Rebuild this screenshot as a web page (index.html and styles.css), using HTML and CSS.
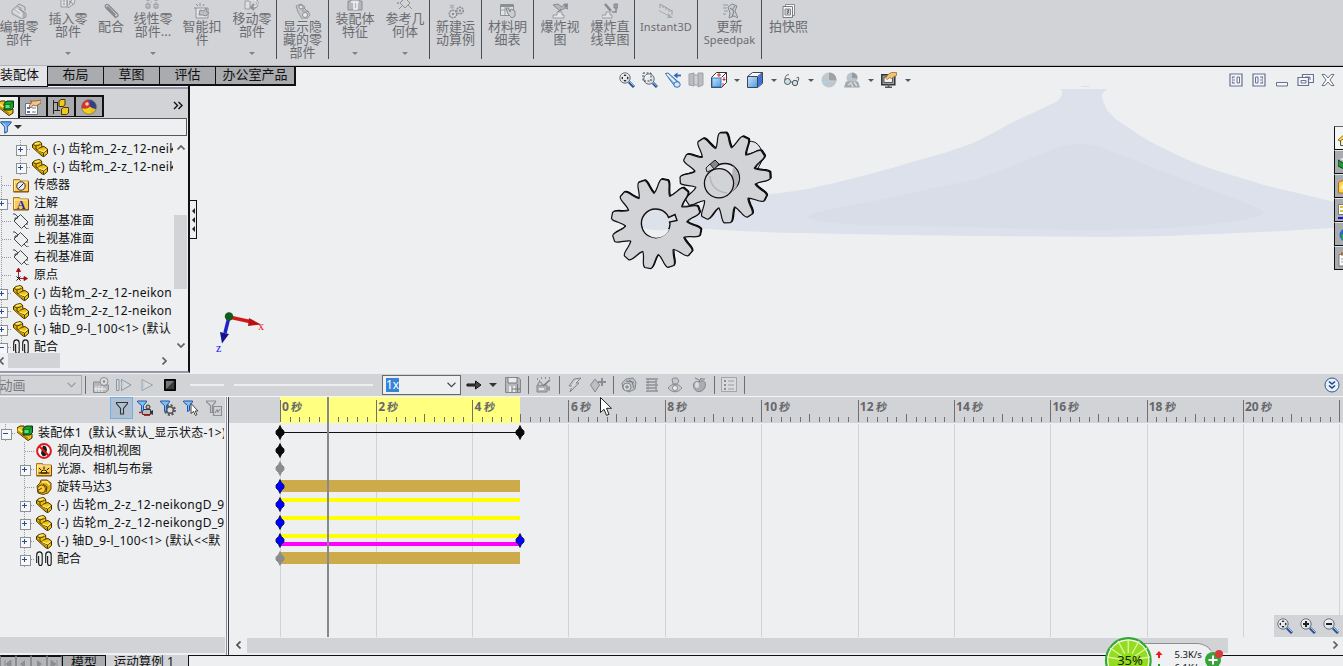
FILE: index.html
```html
<!DOCTYPE html>
<html lang="zh-CN">
<head>
<meta charset="utf-8">
<title>装配体1</title>
<link rel="stylesheet" href="styles.css">
</head>
<body>
<svg class="defs" width="0" height="0">
  <defs>
    <linearGradient id="lens" x1="0" y1="0" x2="1" y2="1"><stop offset="0" stop-color="#fff"/><stop offset="1" stop-color="#c9d3dc"/></linearGradient>
    <linearGradient id="blueface" x1="0" y1="0" x2="1" y2="1"><stop offset="0" stop-color="#c4e3fa"/><stop offset="1" stop-color="#4d9be6"/></linearGradient>
  </defs>
  <symbol id="part" viewBox="0 0 16 16">
    <path d="M.5 3.500L3 1.500 7.500.500 9.500 2 10 6 12 5.500 15.500 8V12.500L12 15.500 10 15 .5 6.500z" fill="#f0c313" stroke="#3d2b00"/>
    <path d="M1 5l10 8.500V15L1 7z" fill="#b98a05"/>
    <path d="M1 3.500l3 1.500v3l7.500 4v3M4 5l4.500-1.500M11.500 12l4-3M6.500 7.500L10 6" fill="none" stroke="#3d2b00" stroke-width=".9"/>
    <path d="M3 2.700l4-.9M6.500 9l5 1.800 2.500-2" stroke="#fff27a" stroke-width="1.300" fill="none"/>
  </symbol>
  <symbol id="assembly" viewBox="0 0 16 16">
    <path d="M0 3l3-2h4l1 4 7 4v4l-4 2.500L0 7z" fill="#f0c31a" stroke="#3d2b00"/>
    <path d="M0 5l11 7.500v2.500L0 7z" fill="#b98a05"/>
    <path d="M6 3.500L9 1h6.500v6.500L13 10H6z" fill="#16a32c" stroke="#07380f"/>
    <path d="M7 4.500h5v4H7zM12.500 4l2.500-2" fill="#5fe07a" stroke="#0d5a1b" stroke-width=".7"/>
    <path d="M1.500 4l4 3" stroke="#fff38a" stroke-width="1.200"/>
  </symbol>
  <symbol id="folder-base" viewBox="0 0 16 16">
    <path d="M.5 2.500h6l1 1.500h8v10.500h-15z" fill="#fbc956" stroke="#b3761a"/>
    <path d="M1.500 5h13M1.500 4v9.500" stroke="#fff1a8" fill="none"/>
    <path d="M15.500 5v10h-15" stroke="#7b4a07" fill="none"/>
  </symbol>
  <symbol id="sensor" viewBox="0 0 16 16"><use href="#folder-base"/><circle cx="8" cy="9" r="4.200" fill="#e8edf4" stroke="#333"/><path d="M5.500 11.500l5-5" stroke="#222"/></symbol>
  <symbol id="note" viewBox="0 0 16 16"><use href="#folder-base"/><text x="8" y="13.500" text-anchor="middle" class="note-letter">A</text></symbol>
  <symbol id="light" viewBox="0 0 16 16"><use href="#folder-base"/><path d="M5 12a3 3 0 0 1 6 0z" fill="#fff04b" stroke="#1e1200"/><path d="M2.500 12h11M8 8V5.500M5 9L3 7M11 9l2-2" stroke="#1e1200" fill="none"/></symbol>
  <symbol id="plane" viewBox="0 0 16 16"><path d="M1 8l6.500-6.500L15 9l-6.500 6.500zM0 1h2l3 3M16 16h-2l-3-3M2 7v-2h3M14 10v2" fill="none" stroke="#333" stroke-width=".9"/></symbol>
  <symbol id="origin" viewBox="0 0 16 16"><path d="M5.500 12V2M3.500 4.500L5.500 1l2 3.500zM6 11.500h7M11 9.500l3.500 2-3.500 2z" stroke="#9c0d16" fill="#9c0d16" stroke-width=".9"/><path d="M3.500 9.500l4 4M7.500 9.500l-4 4" stroke="#111"/></symbol>
  <symbol id="mates" viewBox="0 0 16 16"><path d="M.7 12V4a2.500 2.800 0 0 1 5.500 0v8a1.800 2.500 0 0 1-3.600 0V5M9.700 12V4a2.500 2.800 0 0 1 5.500 0v8a1.800 2.500 0 0 1-3.600 0V5" fill="none" stroke="#1c1c1c" stroke-width="1.150"/></symbol>
  <symbol id="nocam" viewBox="0 0 16 16"><circle cx="8" cy="8" r="6.900" fill="#fff" stroke="#dc1a1a" stroke-width="2"/><path d="M7 2.500l3 1 1 3-1 6-3 1-2-3 1-5z" fill="#1a1a1a"/><path d="M3.300 3.300l9.400 9.400" stroke="#dc1a1a" stroke-width="2"/></symbol>
  <symbol id="motor" viewBox="0 0 16 16"><path d="M1 7l3-3 1-3h6l4 3v6l-3 4-5 1.500L2 14z" fill="#e2ab14" stroke="#6a4600"/><circle cx="5.500" cy="10" r="4" fill="#f5cf3c" stroke="#6a4600"/><path d="M6 3l5 0 2.500 3" stroke="#fff07d" fill="none" stroke-width="1.500"/><path d="M1 12l5-3M7 5l4 3-1 5" stroke="#503500" fill="none"/></symbol>
  <symbol id="sheet" viewBox="0 0 16 16"><path d="M.5 4.500h12v11H.5z" fill="#fff" stroke="#69717e"/><path d="M2 8h3v2H2zM2 12h3v2H2z" fill="#5573b8"/><path d="M7 9h4M7 13h4" stroke="#777"/><path d="M5 2l5 0 6-1v3l-5 3-3-1-2 3-2-2 3-4z" fill="#f2c28e" stroke="#8b5527" stroke-width=".8"/></symbol>
  <symbol id="config" viewBox="0 0 16 16"><path d="M.5 1v14M1 3.500h4M1 11.500h6M4.500 3v9" fill="none" stroke="#222"/><path d="M6 2l2-1.500h4V6l-2 1.500H6zM8.500 10l2-1.500h5V14l-2 1.500h-5z" fill="#f3c81e" stroke="#4b3500"/></symbol>
  <symbol id="ball" viewBox="0 0 16 16"><circle cx="8" cy="8" r="7.300" fill="#f2cf22"/><path d="M.7 9A7.300 7.300 0 0 1 8 .7L9 8Q5 11 .7 9z" fill="#d93030"/><path d="M8 .7A7.300 7.300 0 0 1 15 10Q11 10 8.500 7z" fill="#313e8f"/><path d="M9 8q3 2.500 6 2a7.300 7.300 0 0 1-5 5z" fill="#e5c31a"/><circle cx="8" cy="8" r="7.300" fill="none" stroke="#555" stroke-width=".6"/><circle cx="6" cy="5" r="1.800" fill="#ffc9bc"/></symbol>
  <symbol id="funnel" viewBox="0 0 16 16"><path d="M2 2h12v1L9.500 8v5.500l-3 1.500V8L2 3z" fill="#65a8e8" stroke="#164a96"/><path d="M5 4l3 4v5" fill="none" stroke="#d8efff"/></symbol>
  <symbol id="funnel-open" viewBox="0 0 16 16"><path d="M2.500 2.500h11v1L9.500 8.500v5.500h-3V8.500L2.500 3.500z" fill="none" stroke="#333" stroke-width="1.100"/></symbol>
  <symbol id="funnel-small" viewBox="0 0 16 16"><path d="M.5 1h9v1L6.500 5.500v5l-2 1v-6L.5 2z" fill="#7fc0f2" stroke="#1e55a8"/></symbol>
  <symbol id="f-cam" viewBox="0 0 16 16"><path d="M5.500 9.500h8v5h-8z" fill="#b9bcc3" stroke="#333"/><path d="M14 11l2-1v5l-2-1" fill="#333"/><circle cx="11" cy="7" r="2" fill="#bbb" stroke="#333"/><path d="M2 12.500h4M7 15.500h6" stroke="#c82020" stroke-width="1.500"/><use href="#funnel-small"/></symbol>
  <symbol id="f-gear" viewBox="0 0 16 16"><circle cx="10" cy="10" r="4.800" fill="none" stroke="#555" stroke-width="2.200" stroke-dasharray="2 1.770"/><circle cx="10" cy="10" r="3.300" fill="#ddd" stroke="#555" stroke-width="1.600"/><use href="#funnel-small"/></symbol>
  <symbol id="f-cursor" viewBox="0 0 16 16"><use href="#funnel-small"/><path d="M8 3.500v10l2.500-2 2 4 1.500-1-2-3.500h3z" fill="#fff" stroke="#444"/></symbol>
  <symbol id="f-sheet" viewBox="0 0 16 16"><path d="M.5 1h9v1L6.500 5.500v7h-2v-7L.5 2zM7.500 6.500h8v9h-8zM9 13l2-3 1 2 2-3" fill="none" stroke="#8b8e94" stroke-width="1.200"/></symbol>

  <symbol id="g-edit" viewBox="0 0 16 16"><path d="M1 7l5-4 4 2v3l5 2v4l-4 2-10-5z" fill="#c6c9cc" stroke="#999ca1"/><path d="M5 6l5 3v5M2 8l8 5" fill="none" stroke="#eef0f2"/><path d="M6 3l2-2 6 3v4M8 6l5 3v6" stroke="#8e9196" fill="none"/></symbol>
  <symbol id="g-insert" viewBox="0 0 16 16"><path d="M1 3h6v9H1zM7 4l5-2 3 3-1 4-6 4z" fill="#dcdfe1" stroke="#999ca1"/><path d="M3 6h2M3 9h2M9 6l4 3M13 2l-4 8" stroke="#898c91" fill="none"/></symbol>
  <symbol id="g-clip" viewBox="0 0 16 16"><path d="M13 15L3 5c-2-2.500.5-5 2.500-3l9 9c1.500 2-1 4-2.500 2.500L4.500 5.500c-1-1.500 0-2 1-1l7 7.500" fill="none" stroke="#85888d" stroke-width="1.200"/></symbol>
  <symbol id="g-pattern" viewBox="0 0 16 16"><path d="M1 1h4v4H1zM9 1h4v4H9zM1 9h4v4H1zM9 9h4v4H9z" fill="#c6c9cc" stroke="#96999e"/><path d="M3 5v10M11 5v10M6 7h2" stroke="#96999e" stroke-dasharray="1 1"/></symbol>
  <symbol id="g-smart" viewBox="0 0 16 16"><path d="M2 5h12v10H2z" fill="#e0e2e4" stroke="#919499"/><path d="M5 12l1-5 4 1 2-3 1 4 2 1-3 3-3-1z" fill="#babdc1" stroke="#888b90"/><path d="M2 1l2 2M6 0v3M10 1L9 3M0 5h2" stroke="#888b90"/></symbol>
  <symbol id="g-move" viewBox="0 0 16 16"><path d="M1 6h5v8H1z" fill="#dddfe1" stroke="#9a9da2"/><path d="M4 4h5a4 4 0 0 1 0 9H8M10 9l-3 3.500 3 2.500" fill="none" stroke="#92959a" stroke-width="2"/><path d="M5 5h5a3 3 0 0 1 0 7" fill="none" stroke="#e9ebed"/></symbol>
  <symbol id="g-gears" viewBox="0 0 16 16"><circle cx="5" cy="11" r="3.700" fill="#d9dbdd" stroke="#888b90" stroke-width="1.600" stroke-dasharray="2 .7"/><circle cx="12" cy="7.500" r="3.200" fill="#d9dbdd" stroke="#888b90" stroke-width="1.600" stroke-dasharray="2 .7"/><circle cx="5" cy="11" r="1.300" fill="#888b90"/><circle cx="12" cy="7.500" r="1.200" fill="#888b90"/><path d="M4 1v5M1.500 2l5 3M6.500 2l-5 3" stroke="#9fa2a7" stroke-width=".8"/></symbol>
  <symbol id="g-bolts" viewBox="0 0 16 16"><path d="M1 3l5-2 4 3-3 4 6 0 2 4-3 4H7L3 9z" fill="#c5c8cb" stroke="#95989d"/><circle cx="6" cy="4" r="2" fill="#e8eaec" stroke="#888b90"/><circle cx="10" cy="12" r="2.500" fill="#e8eaec" stroke="#888b90"/><path d="M9 5l5 5" stroke="#888b90"/></symbol>
  <symbol id="g-feature" viewBox="0 0 16 16"><path d="M1 6h3V2h8v4h3v9H1z" fill="#b4b7bb" stroke="#8b8e93"/><path d="M4 7h8M7 7v7h3V7" stroke="#f2f3f4" fill="none" stroke-width="1.500"/></symbol>
  <symbol id="g-geom" viewBox="0 0 16 16"><path d="M3 8l5-5 5 5-5 5zM1 2l5 4M15 14l-4-4M14 2l-4 4M2 14l4-4" fill="none" stroke="#8e9196"/><path d="M13 1l2 2M0 8h2" stroke="#72757a"/></symbol>
  <symbol id="g-table" viewBox="0 0 16 16"><path d="M.5 1.500h13v11H.5z" fill="#e1e3e4" stroke="#8b8e93"/><path d="M1 3h12" stroke="#8b8e93" stroke-width="2"/><path d="M1 7h12M5 3v9M9 3v9" stroke="#9b9ea2"/><path d="M6 5l2 0 2 4 1-3 4 2v5l-3 2-4-4z" fill="#cbced1" stroke="#85888d"/></symbol>
  <symbol id="g-explode" viewBox="0 0 16 16"><path d="M1 2l5-1 4 3 2-3h4v5l-3-1-5 3z" fill="#b3b6ba" stroke="#898c91"/><path d="M12.500 1h3v3.500h-3z" fill="#84878c"/><path d="M5 9h5v3h2v3H1v-3h4z" fill="#e3e5e6" stroke="#96999e"/><path d="M9 6l-3 3" stroke="#75787d"/></symbol>
  <symbol id="g-line" viewBox="0 0 16 16"><path d="M3 1l6 7" stroke="#878a8f" stroke-width="2.500"/><path d="M14 3v6H10" fill="none" stroke="#878a8f" stroke-width="1.500"/><path d="M4 9h4v3h2v3H0v-3h4z" fill="#e0e2e4" stroke="#999ca1"/><path d="M12 1h4v4h-4z" fill="#9b9ea2" stroke="#85888d"/></symbol>
  <symbol id="g-instant" viewBox="0 0 16 16"><path d="M2 1l12 7M2 1v4M5 3v2M8 4v3M11 6v3M14 7v5" fill="none" stroke="#9b9ea2"/><path d="M1 7l9 5 0-2 5 5-6 0 1-2-9-5z" fill="#a7aaae"/></symbol>
  <symbol id="g-update" viewBox="0 0 16 16"><path d="M1 2h5M1 5h4M2 8h4M1 11h3" stroke="#96999e"/><path d="M6 4l4-3 5 2-2 5 3 7-4-2-5 2 1-5z" fill="#c9ccd0" stroke="#888b90"/><path d="M8 5l4 3-2 6M13 3l-3 4" stroke="#788088" fill="none"/></symbol>
  <symbol id="g-snap" viewBox="0 0 16 16"><path d="M4.500 1.500h9v11h-9z" fill="#fff" stroke="#85888d"/><path d="M2 3.500h9.500v11H2z" fill="#f5f6f7" stroke="#777a7f"/><path d="M4 6h5.500v6H4z" fill="#ccd0d3" stroke="#888"/><path d="M6 7h2L6 9h2l-2 2" stroke="#666" fill="none"/></symbol>

  <symbol id="mag-fit" viewBox="0 0 16 16"><circle cx="6" cy="6" r="5.200" fill="url(#lens)" stroke="#677078"/><path d="M6 2l1.500 2h-3zM6 10l1.500-2h-3zM2 6l2-1.500v3zM10 6L8 4.500v3z" fill="#222"/><path d="M10 10l5 5" stroke="#31518f" stroke-width="3"/><path d="M10.500 9.500l4.500 4.500" stroke="#8bcff5"/></symbol>
  <symbol id="mag-area" viewBox="0 0 16 16"><circle cx="7" cy="7" r="5.200" fill="url(#lens)" stroke="#677078"/><path d="M1 1h8v8H1z" fill="none" stroke="#444" stroke-dasharray="2 1.500"/><path d="M11 11l4 4" stroke="#31518f" stroke-width="3"/><path d="M11 10.500l4 4" stroke="#8bcff5"/></symbol>
  <symbol id="mag-plus" viewBox="0 0 16 16"><circle cx="6" cy="6" r="5.200" fill="url(#lens)" stroke="#677078"/><path d="M6 3v6M3 6h6" stroke="#222" stroke-width="2"/><path d="M10 10l5 5" stroke="#31518f" stroke-width="3"/><path d="M10.500 9.500l4.500 4.500" stroke="#8bcff5"/></symbol>
  <symbol id="mag-minus" viewBox="0 0 16 16"><circle cx="6" cy="6" r="5.200" fill="url(#lens)" stroke="#677078"/><path d="M3 6h6" stroke="#222" stroke-width="2"/><path d="M10 10l5 5" stroke="#31518f" stroke-width="3"/><path d="M10.500 9.500l4.500 4.500" stroke="#8bcff5"/></symbol>
  <symbol id="prev-view" viewBox="0 0 16 16"><path d="M.5 1.500L3 1l11 9.500-3.500 4.500L5 8z" fill="#7fbdf0" stroke="#3c6aa5"/><path d="M2 2l8 8" stroke="#fff" stroke-width="1.500"/><ellipse cx="12" cy="12.500" rx="3.200" ry="2.800" fill="#cfe8fb" stroke="#3c6aa5"/><path d="M16 3.500h-5" stroke="#2f68c4" stroke-width="1.800"/><path d="M12.500.500L8.500 3.500l4 3z" fill="#2f68c4"/></symbol>
  <symbol id="section" viewBox="0 0 16 16"><path d="M1 2l5-1v13l-5-1zM10 1h5v12l-5 2z" fill="#b9bcc0" stroke="#a0a3a8"/><path d="M6 3h4v10H6z" fill="#cfd1d3" stroke="#a1a4a8"/></symbol>
  <symbol id="orient" viewBox="0 0 16 16"><path d="M.5 5.500l5-5h10v10l-5 5H.5z" fill="#fff" stroke="#333"/><path d="M1 6h9v9H1z" fill="url(#blueface)" stroke="#3875b8"/><path d="M8 1v4M6 3h4M13 5v4M11.500 7.500h3M12 11v3" stroke="#d32222"/><path d="M10.500 5.500l5-5" stroke="#333"/></symbol>
  <symbol id="cube" viewBox="0 0 16 16"><path d="M.5 4.500l5-4h10v11l-5 4H.5z" fill="#f5f8fc" stroke="#445"/><path d="M1 5h9.500v10H1z" fill="url(#blueface)"/><path d="M11 5l4-4v10.500l-4 3.500z" fill="#3f72d8"/><path d="M.5 4.500h10v11M10.500 4.500l5-4" fill="none" stroke="#445"/></symbol>
  <symbol id="glasses" viewBox="0 0 16 16"><circle cx="3.500" cy="9.500" r="3" fill="#c9e2ee" stroke="#555"/><circle cx="11" cy="11" r="2.700" fill="#c9e2ee" stroke="#555"/><path d="M1 8c0-4 2-6 4-5M6.500 10h2M13.500 10c2-4 1.500-6-1-4" fill="none" stroke="#555"/></symbol>
  <symbol id="sphere" viewBox="0 0 16 16"><circle cx="8" cy="8" r="7.500" fill="#c2c8cc"/><path d="M8 .5a7.500 7.500 0 0 1 7.500 8L8 8z" fill="#9ea2a6"/><path d="M1 9h6v2H2M9 12h5" fill="#bddae6" stroke="#a8cbd8"/></symbol>
  <symbol id="scene" viewBox="0 0 16 16"><circle cx="8" cy="6" r="5.500" fill="#b9c5cc"/><path d="M8 .5a5.500 5.500 0 0 1 5.500 6L8 6z" fill="#979ba0"/><path d="M0 15.500l2-6h12l2 6z" fill="#a4a7ab"/><path d="M4 13l3-2 2 4M10 10l3 4" stroke="#dadddf" stroke-width="1.500" fill="none"/></symbol>
  <symbol id="display" viewBox="0 0 16 16"><path d="M.8 2.800h13v10H.8z" fill="#9da3aa" stroke="#333" stroke-width="1.500"/><path d="M3 5h8.500v5.500H3z" fill="#eef1f5" stroke="#555"/><path d="M4 15.300h7M7.500 12v3" stroke="#555" stroke-width="1.500"/><path d="M4.500 6l3-4 3-1.500h5v3l-3 1.500-2 1.500-2-1-2 2z" fill="#efc275" stroke="#a36e26" stroke-width=".8"/></symbol>

  <symbol id="t-calc" viewBox="0 0 16 16"><path d="M.5 5h8v3h7v5l-3 2.500H.5z" fill="#b5b8bc" stroke="#8a8d92"/><circle cx="11" cy="4.500" r="4" fill="#dadde0" stroke="#8a8d92"/><path d="M3 9v6M6 9v6M9 9v6M1 12h12" stroke="#f3f4f5"/><circle cx="11" cy="4.500" r="1.300" fill="#8a8d92"/></symbol>
  <symbol id="t-start" viewBox="0 0 16 16"><path d="M.5 2.500h2.500v11H.5zM5.500 2.500L15 8l-9.500 5.500z" fill="#d5dade" stroke="#8c959b"/><path d="M6.500 5v6" stroke="#b5d2dc" stroke-width="2"/></symbol>
  <symbol id="t-play" viewBox="0 0 16 16"><path d="M3 2.500L13.500 8 3 13.500z" fill="#d5dade" stroke="#9aa2a7"/><path d="M4.500 5v6" stroke="#b5d2dc" stroke-width="1.500"/></symbol>
  <symbol id="t-stop" viewBox="0 0 16 16"><path d="M2.500 2.500h11v11h-11z" fill="#111" stroke="#000"/><path d="M4 4h8v8H4z" fill="#3a3a3a"/><path d="M4 4h8L4 12z" fill="#767676"/></symbol>
  <symbol id="t-arrow" viewBox="0 0 16 16"><path d="M1 7h8.500V4l5.500 4-5.500 4V9H1z" fill="#444" stroke="#111"/></symbol>
  <symbol id="t-save" viewBox="0 0 16 16"><path d="M.5.500h13l2 2v13H.5z" fill="#b4b7bb" stroke="#83868b"/><path d="M3 1h9v5H3zM4 9h6v6H4z" fill="#e8eaeb"/><path d="M7 9v6.500M12.500 7v8.500M7 12h8M3 1v5h9V1" stroke="#777a7f" fill="none"/></symbol>
  <symbol id="t-wizard" viewBox="0 0 16 16"><path d="M2 8h10v7H2z" fill="#b0b3b7" stroke="#85888d"/><path d="M12 10l3-1v5l-3-1" fill="#96999e"/><circle cx="5" cy="7" r="2" fill="#c9ccd0" stroke="#85888d"/><path d="M8 9l7-6M2 2h1M6 1h1M10 1h1M4 4h1M14 1h1" stroke="#777a7f" stroke-width="1.500"/><path d="M4 11h5v2H4z" fill="#e4e6e7"/></symbol>
  <symbol id="t-key" viewBox="0 0 16 16"><path d="M7 2l7-1-5 5h3l-9 9 2-6H2z" fill="#c7cacc" stroke="#84888d"/><path d="M10 3L4 11" stroke="#eef0f1"/></symbol>
  <symbol id="t-addkey" viewBox="0 0 16 16"><path d="M5 2l4.500 6L5 15 .5 8z" fill="#bcbfc3" stroke="#85888d"/><path d="M12 1v8M8 5h8" stroke="#8a8d92" stroke-width="2"/></symbol>
  <symbol id="t-motor" viewBox="0 0 16 16"><path d="M1 6l4-4 7-1 3 4-1 7-6 3-6-3z" fill="#bfc3c6" stroke="#83888c"/><circle cx="6" cy="10" r="4" fill="#d6dadd" stroke="#83888c"/><path d="M5 4l6 1 2 6M8 3l5 3M4 10h4M6 8v4" fill="none" stroke="#777c80"/></symbol>
  <symbol id="t-spring" viewBox="0 0 16 16"><path d="M2 2h12M2 5h11M2 8h12M2 11h11M2 14h12" stroke="#9da1a5" stroke-width="1.800"/><path d="M4 2v12M12 3v11" stroke="#777a7f" stroke-dasharray="1.500 1.500"/></symbol>
  <symbol id="t-contact" viewBox="0 0 16 16"><path d="M5 2l2-1h3l2 3-2 3H6zM1 11c4-5 10-5 14 0-4 5-10 5-14 0z" fill="#c5c8cb" stroke="#888b90"/><circle cx="8" cy="11" r="2.500" fill="#eee" stroke="#888b90"/></symbol>
  <symbol id="t-gravity" viewBox="0 0 16 16"><path d="M8 5c4-3 8 0 6 5-2 6-9 6-11 1C1 7 4 3 8 5z" fill="#a9acb0" stroke="#84878c"/><path d="M8 5l2-4M8 3L4 1M10 2h4" stroke="#777a7f"/><ellipse cx="6" cy="8" rx="2" ry="3" fill="#d8dcdf"/></symbol>
  <symbol id="t-props" viewBox="0 0 16 16"><path d="M.5.500h15v14H.5z" fill="#d8dadd" stroke="#a2a5a9"/><path d="M3 4h2M3 8h2M3 12h2" stroke="#8a8d91" stroke-width="2"/><path d="M7 4h6M7 8h6M7 12h6" stroke="#999ca1"/></symbol>

  <symbol id="w-left" viewBox="0 0 14 14"><path d="M1 1h12v12H1z" fill="#f4f5f8" stroke="#6a7090" stroke-width="1.200"/><path d="M8 4h2.500v6H8z" fill="none" stroke="#6a7090"/><path d="M6 4H3.500V5.500M3.500 8.500V10H6M3 7h3" fill="none" stroke="#6a7090" stroke-width="1.200"/></symbol>
  <symbol id="w-right" viewBox="0 0 14 14"><path d="M1 1h12v12H1z" fill="#f4f5f8" stroke="#6a7090" stroke-width="1.200"/><path d="M3.500 4H6v6H3.500z" fill="none" stroke="#6a7090"/><path d="M8 4h2.500v1.500M10.500 8.500V10H8M8 7h3" fill="none" stroke="#6a7090" stroke-width="1.200"/></symbol>
  <symbol id="w-min" viewBox="0 0 14 14"><path d="M1.500 9.500h11v3.500h-11z" fill="#f7f8fa" stroke="#6a7090"/></symbol>
  <symbol id="w-restore" viewBox="0 0 17 14"><path d="M5.500 1.500h11v8h-11z" fill="#f7f8fa" stroke="#6a7090" stroke-width="1.200"/><path d="M1 4.500h10.500v8H1z" fill="#f7f8fa" stroke="#6a7090" stroke-width="1.200"/><path d="M4 7.500h5v2.500H4zM8 4h5v3" fill="none" stroke="#6a7090"/></symbol>
  <symbol id="w-close" viewBox="0 0 14 14"><path d="M1 1.500h3L7 5l3-3.500h3L9 7l4 5.500h-3L7 9l-3 3.500H1L5 7z" fill="#f7f8fa" stroke="#6a7680"/></symbol>

  <symbol id="sector" overflow="visible">
    <path d="M0 0L-7.900-29.500Q-7-32-5.800-37Q-5-44-3-45H3Q5-44 5.800-37Q7-32 7.900-29.500Z" fill="#d2d3d7"/>
    <path d="M-7.900-29.500Q-6.500-32-5.800-37Q-5-44-3-45H3Q5-44 5.800-37Q6.500-32 7.900-29.500" fill="none" stroke="#111" stroke-width="1.200"/>
  </symbol>
  <symbol id="gear" overflow="visible">
    <circle r="30" fill="#d2d3d7"/>
    <use href="#sector"/><use href="#sector" transform="rotate(30)"/><use href="#sector" transform="rotate(60)"/><use href="#sector" transform="rotate(90)"/><use href="#sector" transform="rotate(120)"/><use href="#sector" transform="rotate(150)"/><use href="#sector" transform="rotate(180)"/><use href="#sector" transform="rotate(210)"/><use href="#sector" transform="rotate(240)"/><use href="#sector" transform="rotate(270)"/><use href="#sector" transform="rotate(300)"/><use href="#sector" transform="rotate(330)"/>
  </symbol>
  <symbol id="key" overflow="visible"><path d="M0-7L1.500-4 4-1.500V1.500L1.500 4 0 7-1.500 4-4 1.500V-1.500L-1.500-4Z" stroke-width=".8"/></symbol>
  <symbol id="ticks" overflow="visible"><path d="M.5 3v22M10.130 20v5M19.760 20v5M29.390 20v5M39.020 20v5M48.650 17v8M58.280 20v5M67.910 20v5M77.540 20v5M87.170 20v5" stroke="#6e6f73"/></symbol>
</svg>

<header class="ribbon">
  <div class="cmd"><svg><use href="#g-edit"/></svg><span>编辑零<br>部件</span></div>
  <div class="cmd drop"><svg><use href="#g-insert"/></svg><span>插入零<br>部件</span><i></i></div>
  <div class="cmd"><svg><use href="#g-clip"/></svg><span>配合</span></div>
  <div class="cmd drop"><svg><use href="#g-pattern"/></svg><span>线性零<br>部件...</span><i></i></div>
  <div class="cmd"><svg><use href="#g-smart"/></svg><span>智能扣<br>件</span></div>
  <div class="cmd drop end"><svg><use href="#g-move"/></svg><span>移动零<br>部件</span><i></i></div>
  <div class="cmd end"><svg><use href="#g-bolts"/></svg><span>显示隐<br>藏的零<br>部件</span></div>
  <div class="cmd drop"><svg><use href="#g-feature"/></svg><span>装配体<br>特征</span><i></i></div>
  <div class="cmd drop end"><svg><use href="#g-geom"/></svg><span>参考几<br>何体</span><i></i></div>
  <div class="cmd end"><svg><use href="#g-gears"/></svg><span>新建运<br>动算例</span></div>
  <div class="cmd end"><svg><use href="#g-table"/></svg><span>材料明<br>细表</span></div>
  <div class="cmd"><svg><use href="#g-explode"/></svg><span>爆炸视<br>图</span></div>
  <div class="cmd end"><svg><use href="#g-line"/></svg><span>爆炸直<br>线草图</span></div>
  <div class="cmd end"><svg><use href="#g-instant"/></svg><span class="latin">Instant3D</span></div>
  <div class="cmd end"><svg><use href="#g-update"/></svg><span>更新<br><b class="latin">Speedpak</b></span></div>
  <div class="cmd"><svg><use href="#g-snap"/></svg><span>拍快照</span></div>
</header>

<main class="workspace">
  <aside class="manager">
    <div class="manager-tabs">
      <div class="mtab on"><svg class="ico"><use href="#assembly"/></svg></div>
      <div class="mtab"><svg class="ico"><use href="#sheet"/></svg></div>
      <div class="mtab"><svg class="ico"><use href="#config"/></svg></div>
      <div class="mtab"><svg class="ico"><use href="#ball"/></svg></div>
      <svg class="more" viewBox="0 0 10 9"><path d="M1 1l3.500 3.500L1 8M5.500 1L9 4.500 5.500 8" fill="none" stroke="#111" stroke-width="1.400"/></svg>
    </div>
    <div class="filter"><svg class="ico"><use href="#funnel"/></svg><i class="caret"></i></div>
    <div class="tree-wrap">
      <ul class="tree">
        <li class="sub"><em class="box plus"></em><svg class="ico"><use href="#part"/></svg><span class="mx">(-) 齿轮m_2-z_12-neik</span></li>
        <li class="sub"><em class="box plus"></em><svg class="ico"><use href="#part"/></svg><span class="mx">(-) 齿轮m_2-z_12-neik</span></li>
        <li><em></em><svg class="ico"><use href="#sensor"/></svg><span>传感器</span></li>
        <li><em class="box plus"></em><svg class="ico"><use href="#note"/></svg><span>注解</span></li>
        <li><em></em><svg class="ico"><use href="#plane"/></svg><span>前视基准面</span></li>
        <li><em></em><svg class="ico"><use href="#plane"/></svg><span>上视基准面</span></li>
        <li><em></em><svg class="ico"><use href="#plane"/></svg><span>右视基准面</span></li>
        <li><em></em><svg class="ico"><use href="#origin"/></svg><span>原点</span></li>
        <li><em class="box plus"></em><svg class="ico"><use href="#part"/></svg><span class="mx">(-) 齿轮m_2-z_12-neikon</span></li>
        <li><em class="box plus"></em><svg class="ico"><use href="#part"/></svg><span class="mx">(-) 齿轮m_2-z_12-neikon</span></li>
        <li><em class="box plus"></em><svg class="ico"><use href="#part"/></svg><span class="mx">(-) 轴D_9-l_100&lt;1&gt; (默认</span></li>
        <li><em class="box"></em><svg class="ico"><use href="#mates"/></svg><span>配合</span></li>
      </ul>
      <div class="vscroll">
        <svg viewBox="0 0 8 5"><path d="M.5 4.500L4 1l3.500 3.500" fill="none" stroke="#606266" stroke-width="1.700"/></svg>
        <div class="vthumb"></div>
        <svg viewBox="0 0 8 5"><path d="M.5.500L4 4 7.500.500" fill="none" stroke="#606266" stroke-width="1.700"/></svg>
      </div>
    </div>
    <div class="hscroll small">
      <svg viewBox="0 0 5 8"><path d="M4.500.500L1 4l3.500 3.500" fill="none" stroke="#606266" stroke-width="1.700"/></svg>
      <div class="hthumb"></div>
      <svg viewBox="0 0 5 8"><path d="M.5.500L4 4 .5 7.500" fill="none" stroke="#606266" stroke-width="1.700"/></svg>
    </div>
  </aside>

  <section class="viewport">
    <svg class="model" viewBox="190 67 1153 306">
      <path d="M607 221Q690 212 771 194Q790 192 807 189Q860 178 919 160Q950 152 973 143Q990 135 1011 123L1056 102Q1063 97 1062 91L1060 89H1107L1102 94Q1101 98 1107 110Q1115 120 1129 128Q1145 140 1167 150Q1190 162 1215 170L1264 185L1343 204V227Q1290 231 1215 234Q1160 237 1104 237Q930 236 800 233Q750 232 710 229Q650 228 607 221Z" fill="#dce1eb"/>
      <path d="M808 216Q815 211 869 202L973 180Q1000 172 1056 148Q1078 140 1101 147L1167 173L1229 197Q1262 208 1264 213Q1255 221 1181 227Q1140 230 1094 230Q1030 230 973 227L869 225Q808 223 808 216Z" fill="#d8dde8"/>
      <path d="M1081 86.500h9" stroke="#dce1eb"/>
      <g>
        <path d="M747 142Q756 139 761 149L764 157L757 170L745 160Z" fill="#e3e4e8" stroke="#111"/>
        <use href="#gear" transform="translate(726.100 177.200) rotate(-3)" class="shadow"/>
        <use href="#gear" transform="translate(725.100 177.800) rotate(-3)"/>
        <circle cx="725" cy="178" r="14.500" fill="#e5e5ea" stroke="#111" stroke-width="1.300"/>
        <path d="M733 166q9 9 3 22l-6 6z" fill="#b7b2bc"/>
        <path d="M708 166l7-6 4 4-7 8z" fill="#85878b" stroke="#111"/>
        <path d="M707 172l-1-4 4-4 4 5z" fill="#d2d3d7" stroke="#222"/>
        <circle cx="719" cy="183.300" r="14.600" fill="#d2d3d7" stroke="#111" stroke-width="1.300"/>
        <path d="M710 176q1 15 17 17" fill="none" stroke="#b4b6ba" stroke-width="1.500"/>
        <use href="#gear" transform="translate(657 223.300) rotate(11)" class="shadow"/>
        <use href="#gear" transform="translate(656.200 223.900) rotate(11)"/>
        <path d="M667.500 215.200A14.300 14.300 0 1 0 670 224L669.500 222L677 220.500L675 214.500L668.500 217.500Z" fill="#dde1ea" stroke="#111" stroke-width="1.400"/>
        <path d="M643 228q13 4 26.500 1a14 13.500 0 0 1-26.500-1" fill="#edeff1"/>
      </g>
      <g>
        <path d="M229 317L252 322" stroke="#d01a1a" stroke-width="3.500"/><path d="M249 318l12 6.500-13 1.500z" fill="#b81212"/>
        <path d="M229 317L225 333" stroke="#2222c8" stroke-width="3.500"/><path d="M220 332l9 2-7 9.500z" fill="#14148c"/>
        <circle cx="229" cy="316.500" r="4.200" fill="#145a1c"/>
        <text x="258" y="330" class="axis ax">x</text><text x="216" y="352" class="axis az">z</text>
      </g>
    </svg>
    <nav class="view-tools">
      <svg class="ico"><use href="#mag-fit"/></svg><svg class="ico"><use href="#mag-area"/></svg><svg class="ico"><use href="#prev-view"/></svg><svg class="ico"><use href="#section"/></svg>
      <svg class="ico"><use href="#orient"/></svg><i class="caret"></i>
      <svg class="ico"><use href="#cube"/></svg><i class="caret"></i>
      <svg class="ico"><use href="#glasses"/></svg><i class="caret"></i>
      <svg class="ico"><use href="#sphere"/></svg><svg class="ico"><use href="#scene"/></svg><i class="caret"></i>
      <svg class="ico"><use href="#display"/></svg><i class="caret"></i>
    </nav>
    <nav class="win-tools">
      <svg><use href="#w-left"/></svg><svg><use href="#w-right"/></svg><svg><use href="#w-min"/></svg><svg class="wide"><use href="#w-restore"/></svg><svg><use href="#w-close"/></svg>
    </nav>
    <nav class="task-pane">
      <div class="task on"><svg viewBox="0 0 8 16"><path d="M2.500 8v6.500H9V8" fill="#f4ecc4" stroke="#555"/><path d="M0 9l8-7v4L2 10z" fill="#ffe05a" stroke="#94700a"/></svg></div>
      <div class="task"><svg viewBox="0 0 8 16"><path d="M0 5l8 5v5L0 11z" fill="#1c9c30" stroke="#063f10"/><path d="M2 4l6-2v5z" fill="#eee"/></svg></div>
      <div class="task"><svg viewBox="0 0 8 16"><path d="M.5 4l2-2H9v12H.500z" fill="#ffd24c" stroke="#b06a10"/><path d="M3 10l3-5" stroke="#fff7b0" stroke-width="2"/></svg></div>
      <div class="task"><svg viewBox="0 0 8 16"><path d="M.5 1.500H9v10H.500z" fill="#fff" stroke="#777"/><path d="M2 4h3M2 8h3" stroke="#d7c32b" stroke-width="2"/><path d="M0 15h8" stroke="#1515d0" stroke-width="2"/></svg></div>
      <div class="task"><svg viewBox="0 0 8 16"><circle cx="8" cy="8" r="6.500" fill="#2864cc"/><path d="M3 7l5 2v5l-4-2z" fill="#25ae35"/></svg></div>
      <div class="task"><svg viewBox="0 0 8 16"><path d="M1 3.500h8V15H1z" fill="#fff" stroke="#777"/><path d="M3 1.500h6v3H3z" fill="#a56c3c"/><path d="M3 8h5M3 11h5" stroke="#999"/></svg></div>
    </nav>
  </section>

  <nav class="doc-tabs">
    <div class="dtab on">装配体</div><div class="dtab">布局</div><div class="dtab">草图</div><div class="dtab">评估</div><div class="dtab">办公室产品</div>
  </nav>
  <div class="flyout"><i></i><i></i><i></i></div>
</main>

<div class="motion-bar">
  <div class="study-type"><span>动画</span><svg viewBox="0 0 8 5"><path d="M.5.500L4 4 7.500.500" fill="none" stroke="#999ba0"/></svg></div>
  <b></b>
  <svg class="ico"><use href="#t-calc"/></svg><svg class="ico"><use href="#t-start"/></svg><svg class="ico"><use href="#t-play"/></svg><svg class="ico"><use href="#t-stop"/></svg>
  <div class="slider"><i></i><i></i></div>
  <div class="speed"><span>1x</span><svg viewBox="0 0 8 5"><path d="M.5.500L4 4 7.500.500" fill="none" stroke="#444" stroke-width="1"/></svg></div>
  <svg class="ico"><use href="#t-arrow"/></svg><i class="caret dark"></i><svg class="ico"><use href="#t-save"/></svg>
  <b></b><svg class="ico"><use href="#t-wizard"/></svg><b></b>
  <svg class="ico"><use href="#t-key"/></svg><svg class="ico"><use href="#t-addkey"/></svg><b></b>
  <svg class="ico"><use href="#t-motor"/></svg><svg class="ico"><use href="#t-spring"/></svg><svg class="ico"><use href="#t-contact"/></svg><svg class="ico"><use href="#t-gravity"/></svg>
  <b></b><svg class="ico"><use href="#t-props"/></svg><b></b>
  <svg class="ico collapse" viewBox="0 0 16 16"><circle cx="8" cy="8" r="7" fill="#e8f1fb" stroke="#2d568e"/><path d="M5 4.500L8 7l3-2.500M5 8.500L8 11l3-2.500" fill="none" stroke="#1d4684" stroke-width="1.600"/></svg>
</div>

<section class="study">
  <div class="study-tree">
    <div class="filters">
      <div class="fbtn on"><svg class="ico"><use href="#funnel-open"/></svg></div>
      <div class="fbtn"><svg class="ico"><use href="#f-cam"/></svg></div>
      <div class="fbtn"><svg class="ico"><use href="#f-gear"/></svg></div>
      <div class="fbtn"><svg class="ico"><use href="#f-cursor"/></svg></div>
      <div class="fbtn"><svg class="ico"><use href="#f-sheet"/></svg></div>
    </div>
    <ul class="tree motion">
      <li class="root"><em class="box"></em><svg class="ico"><use href="#assembly"/></svg><span class="mx">装配体1&nbsp; (默认&lt;默认_显示状态-1&gt;)</span></li>
      <li><em></em><svg class="ico"><use href="#nocam"/></svg><span>视向及相机视图</span></li>
      <li><em class="box plus"></em><svg class="ico"><use href="#light"/></svg><span>光源、相机与布景</span></li>
      <li><em></em><svg class="ico"><use href="#motor"/></svg><span>旋转马达3</span></li>
      <li><em class="box plus"></em><svg class="ico"><use href="#part"/></svg><span class="mx">(-) 齿轮m_2-z_12-neikongD_9</span></li>
      <li><em class="box plus"></em><svg class="ico"><use href="#part"/></svg><span class="mx">(-) 齿轮m_2-z_12-neikongD_9</span></li>
      <li><em class="box plus"></em><svg class="ico"><use href="#part"/></svg><span class="mx">(-) 轴D_9-l_100&lt;1&gt; (默认&lt;&lt;默</span></li>
      <li><em class="box plus"></em><svg class="ico"><use href="#mates"/></svg><span>配合</span></li>
    </ul>
    <div class="tree-scroll"></div>
  </div>
  <div class="timeline">
    <div class="ruler">
      <svg class="ruler-marks" viewBox="229 397 1114 26" shape-rendering="crispEdges">
        <path d="M280 397h240v26H280z" fill="#ffff80"/>
        <use href="#ticks" x="280" y="397"/><use href="#ticks" x="376.300" y="397"/><use href="#ticks" x="472.300" y="397"/><use href="#ticks" x="568.300" y="397"/><use href="#ticks" x="665" y="397"/><use href="#ticks" x="761.300" y="397"/><use href="#ticks" x="857.800" y="397"/><use href="#ticks" x="954.100" y="397"/><use href="#ticks" x="1050.300" y="397"/><use href="#ticks" x="1146.700" y="397"/><use href="#ticks" x="1243" y="397"/><use href="#ticks" x="1339.300" y="397"/>
      </svg>
      <div class="labels"><span>0 <u>秒</u></span><span>2 <u>秒</u></span><span>4 <u>秒</u></span><span>6 <u>秒</u></span><span>8 <u>秒</u></span><span>10 <u>秒</u></span><span>12 <u>秒</u></span><span>14 <u>秒</u></span><span>16 <u>秒</u></span><span>18 <u>秒</u></span><span>20 <u>秒</u></span></div>
    </div>
    <svg class="tracks" viewBox="229 423 1114 214">
      <path d="M280.500 424v213M376.500 424v213M472.500 424v213M568.500 424v213M665.500 424v213M761.500 424v213M858.500 424v213M954.500 424v213M1050.500 424v213M1147.500 424v213M1243.500 424v213M1339.500 424v213" stroke="#d2d3d7"/>
      <path d="M280 432.500h240" stroke="#111"/>
      <path d="M280 480h240v12H280zM280 552h240v12H280z" fill="#cdab4a"/>
      <path d="M280 498h240v4H280zM280 516h240v4H280zM280 534h240v4H280z" fill="#ff0"/>
      <path d="M280 542h240v4H280z" fill="#f0f"/>
      <g fill="#0a0a0a" stroke="#0a0a0a"><use href="#key" x="280" y="432.500"/><use href="#key" x="280" y="450.500"/><use href="#key" x="520" y="432.500"/></g>
      <g fill="#8c8c8c" stroke="#8c8c8c"><use href="#key" x="280" y="468.500"/><use href="#key" x="280" y="558.500"/></g>
      <g fill="#00f" stroke="#101040"><use href="#key" x="280" y="486.500"/><use href="#key" x="280" y="504.500"/><use href="#key" x="280" y="522.500"/><use href="#key" x="280" y="540.500"/><use href="#key" x="520" y="540.500"/></g>
    </svg>
    <div class="hscroll wide-scroll">
      <svg viewBox="0 0 5 8"><path d="M4.500.500L1 4l3.500 3.500" fill="none" stroke="#505256" stroke-width="1.700"/></svg>
      <div class="hthumb"></div>
      <svg viewBox="0 0 5 8"><path d="M.5.500L4 4 .5 7.500" fill="none" stroke="#606266" stroke-width="1.700"/></svg>
    </div>
    <div class="playhead"></div>
    <div class="zoomers"><svg class="ico"><use href="#mag-fit"/></svg><svg class="ico"><use href="#mag-plus"/></svg><svg class="ico"><use href="#mag-minus"/></svg></div>
  </div>
</section>

<footer class="study-tabs">
  <div class="nav-btn"><svg viewBox="0 0 8 8"><path d="M7 0v8L2 4zM1 0v8" fill="#8b8d91" stroke="#8b8d91"/></svg></div>
  <div class="nav-btn"><svg viewBox="0 0 8 8"><path d="M6 0v8L1 4z" fill="#8b8d91"/></svg></div>
  <div class="nav-btn"><svg viewBox="0 0 8 8"><path d="M2 0v8l5-4z" fill="#8b8d91"/></svg></div>
  <div class="nav-btn"><svg viewBox="0 0 8 8"><path d="M1 0v8l5-4zM7 0v8" fill="#8b8d91" stroke="#8b8d91"/></svg></div>
  <div class="stab">模型</div><div class="stab on">运动算例 1</div><div class="rest"></div>
</footer>

<div class="net-meter">
  <svg viewBox="1104 636 122 30">
    <path d="M1130 643.500h68q9 1 14 10l4 14h-86z" fill="#eff0f2"/>
    <path d="M1130 643.500h68q9 1 13 7" fill="none" stroke="#8d8f91"/>
    <circle cx="1128.300" cy="660.500" r="22.300" fill="#fff" stroke="#32a832" stroke-width="2.200"/>
    <circle cx="1128.300" cy="660.500" r="20" fill="#93dd1e"/>
    <path d="M1128.300 660.500V640M1128.300 660.500L1118 641M1128.300 660.500L1139 641M1128.300 660.500L1110 648M1128.300 660.500L1147 648M1128.300 660.500L1107 657M1128.300 660.500L1150 657" stroke="#d9f49c" stroke-width="1.500"/>
    <circle cx="1128.300" cy="662" r="9" fill="#93dd1e"/>
    <text x="1130" y="665" text-anchor="middle" class="pct">35%</text>
    <path d="M1158 658v-3h-2.500l3.500-4 3.500 4h-2.500v3z" fill="#f01616"/><path d="M1158 664h2v3h-2z" fill="#2a9c2a"/>
    <text x="1174.500" y="658" class="rate">5.3K/s</text><text x="1174.500" y="671" class="rate">6.1K/s</text>
    <circle cx="1213" cy="660" r="8" fill="#37a43a"/><path d="M1213 655.500v9M1208.500 660h9" stroke="#fff" stroke-width="2"/>
    <circle cx="1219" cy="654" r="4" fill="#d83a3a"/>
  </svg>
</div>
<svg class="pointer" viewBox="0 0 12 19"><path d="M.5.500v15l3.500-3.200 2.500 6 2.500-1-2.500-6h5z" fill="#fff" stroke="#222"/></svg>
</body>
</html>
```
FILE: styles.css
```css
* { box-sizing: border-box; }
body {
  position: relative;
  display: flex;
  flex-direction: column;
  width: 1343px;
  height: 666px;
  margin: 0;
  overflow: hidden;
  background: #edeff1;
  color: #111;
  font: 12px/18px "Noto Sans", "Noto Sans CJK SC", sans-serif;
}
svg { display: block; flex: none; }
.defs { position: absolute; }
.ico { width: 16px; height: 16px; }
.note-letter { font: bold 12px "Liberation Serif", serif; fill: #1430a8; }
.caret { border: 3px solid transparent; border-top-color: #55575a; border-bottom: 0; width: 6px; height: 3px; }
.caret.dark { border-width: 4px 4px 0; width: 8px; height: 4px; border-top-color: #333; }

/* Command ribbon */
.ribbon {
  display: grid;
  grid-template-columns: 50px 48px 38px 46px 52px 49px 52px 52px 49px 52px 52px 52px 49px 63px 64px 53px;
  flex: none;
  height: 66px;
  margin-left: -6px;
  overflow: hidden;
  background: #d2d3d7;
  border-bottom: 1px solid #b4b5b9;
}
.cmd {
  display: flex;
  flex-direction: column;
  align-items: center;
  height: 59px;
  padding-top: 3px;
  color: #6b6c70;
  font-size: 13px;
  line-height: 13px;
  text-align: center;
  white-space: nowrap;
}
.cmd svg { width: 16px; height: 16px; }
.cmd span { margin-top: 1px; }
.cmd.drop { padding-top: 0; }
.cmd.drop svg { margin-top: -5px; }
.cmd i { margin-top: 14px; border: 3px solid transparent; border-top-color: #808185; border-bottom: 0; }
.cmd.end { border-right: 1px solid #4c4d50; }
.cmd .latin { font-weight: normal; font-size: 11px; letter-spacing: .1px; }

/* Model area */
.workspace { position: relative; display: flex; flex: none; height: 308px; }
.doc-tabs { position: absolute; left: 0; top: 0; display: flex; width: 297px; height: 21px; }
.dtab {
  width: 56px;
  height: 20px;
  background: #a9abaf;
  border: solid #111;
  border-width: 1px 1px 2px 0;
  font-size: 13px;
  line-height: 15px;
  text-align: center;
}
.dtab.on { width: 48px; height: 21px; background: #e4e5e8; border-width: 0 1px 1px 0; line-height: 16px; text-align: left; }
.dtab:last-child { width: 80px; border-right-width: 2px; }
.manager {
  display: flex;
  flex-direction: column;
  flex: none;
  width: 190px;
  height: 307px;
  padding-top: 21px;
  border-right: 2px solid #111;
  border-bottom: 2px solid #9796ad;
  background: #edeff1;
}
.manager-tabs {
  display: flex;
  flex: none;
  height: 31px;
  padding-top: 6px;
  background: #d2d3d7;
  border-top: 2px solid #9796ad;
}
.mtab {
  display: flex;
  align-items: center;
  justify-content: center;
  width: 28px;
  height: 22px;
  background: #a9abaf;
  border: solid #111;
  border-width: 2px 2px 1px 0;
}
.mtab.on { width: 20px; height: 23px; padding-right: 6px; background: #edeff1; border-bottom: 0; }
.more { width: 10px; height: 9px; margin: 6px 5px 0 auto; }
.filter { display: flex; flex: none; align-items: center; gap: 1px; width: 187px; height: 18px; border: solid #55575b; border-width: 1px 1px 1px 0; }
.filter .ico { width: 14px; height: 14px; margin-left: -1px; }
.filter .caret { border-width: 4px 4px 0; width: 8px; height: 4px; border-top-color: #333; }
.tree-wrap { display: flex; height: 217px; overflow: hidden; padding-top: 4px; }
.tree { flex: none; width: 173px; height: 216px; margin: 0; padding: 0; list-style: none; overflow: hidden; }
.tree li { display: flex; align-items: center; height: 18px; margin-left: -3px; white-space: nowrap; }
.tree li.sub { margin-left: 16px; }
.tree em { flex: none; position: relative; width: 16px; height: 18px; background: repeating-linear-gradient(90deg, #999 0 1px, transparent 1px 2px) 5px 9px / 9px 1px no-repeat, repeating-linear-gradient(#999 0 1px, transparent 1px 2px) 4px 0 / 1px 18px no-repeat; }
.tree em.box::before {
  content: "";
  position: absolute;
  left: 0;
  top: 5px;
  width: 9px;
  height: 9px;
  border: 1px solid #8d9095;
  background: linear-gradient(#2d4a92, #2d4a92) 1px 3px / 5px 1px no-repeat, #f6f7f8;
}
.tree em.plus::before { background: linear-gradient(#2d4a92, #2d4a92) 1px 3px / 5px 1px no-repeat, linear-gradient(#2d4a92, #2d4a92) 3px 1px / 1px 5px no-repeat, #f6f7f8; }
.tree span { margin-left: 5px; }
.tree .mx { letter-spacing: .27px; }
.vscroll { display: flex; flex-direction: column; align-items: center; width: 15px; padding-top: 5px; }
.vscroll svg { width: 8px; height: 5px; }
.vthumb { width: 13px; height: 74px; margin: 65px 0 54px; background: #d2d3d7; }
.hscroll { display: flex; align-items: center; height: 15px; }
.hscroll svg { width: 5px; height: 8px; }
.hscroll.small .hthumb { width: 52px; height: 15px; margin-left: 4px; margin-right: 102px; background: #d2d3d7; }
.small svg:first-child { margin-left: -1px; }
.flyout {
  position: absolute;
  left: 190px;
  top: 134px;
  display: flex;
  flex-direction: column;
  align-items: center;
  gap: 3px;
  width: 7px;
  height: 39px;
  padding-top: 7px;
  background: #edeff1;
  border: solid #111;
  border-width: 1px 1px 1px 0;
}
.flyout i { border: 3px solid transparent; border-right-color: #222; border-left: 0; }

.viewport { position: relative; flex: 1; border-top: 1px solid #000; }
.model { width: 1153px; height: 306px; }
.shadow { filter: brightness(.1); }
.axis { font: 12px "Liberation Serif", serif; }
.ax { fill: #f01414; }
.az { fill: #1414f0; }
.view-tools {
  position: absolute;
  left: 425px;
  top: 5px;
  display: grid;
  grid-template-columns: repeat(4, 23.200px) 22px 14px 23px 14px 23px 14px 23px 23px 14px 23px 14px;
  place-items: center;
  width: 330px;
  height: 16px;
}
.win-tools { position: absolute; right: 8px; top: 6px; display: flex; gap: 9px; }
.win-tools svg { width: 14px; height: 14px; }
.win-tools .wide { width: 17px; margin: 0 -2px 0 -1px; }
.task-pane { position: absolute; right: 0; top: 59px; width: 9px; }
.task { height: 24px; background: #a9abaf; border-left: 1px solid #111; border-bottom: 1px solid #111; border-top: 1px solid #e5e5e8; padding: 4px 0 0 3px; overflow: hidden; }
.task.on { background: #f4f5f6; border-top-color: #666; }
.task svg { width: 8px; height: 16px; }

/* Motion toolbar */
.motion-bar {
  display: grid;
  grid-template-columns: 81px 8px 24px 22px 24px 22px 201px 79px 26px 12px 28px 2px 28px 4px 28px 18px 12px 20px 26px 20px 28px 2px 28px 2px 1fr;
  flex: none;
  place-items: center;
  height: 23px;
  background: #d2d3d7;
  border-bottom: 1px solid #f4f5f6;
}
.motion-bar b { width: 1px; height: 18px; background: #6d6e72; }
.study-type { display: flex; justify-content: space-between; align-items: center; width: 82px; height: 20px; padding-right: 5px; border: 1px solid #aaacb0; color: #77787c; font-size: 13px; }
.study-type span { margin-left: -1px; }
.study-type svg, .speed svg { width: 9px; height: 6px; }
.slider { display: flex; gap: 10px; width: 100%; padding-left: 9px; }
.slider i { width: 34px; height: 2px; background: #eceef0; }
.slider i + i { width: 139px; }
.speed { display: flex; justify-content: space-between; align-items: center; width: 79px; height: 20px; padding: 0 4px 0 3px; border: 1px solid #66686c; background: #edeff1; }
.speed span { height: 14px; background: #3584d8; color: #fff; line-height: 14px; }
.collapse { justify-self: end; margin-right: 3px; }

/* Motion study */
.study { display: flex; flex: none; height: 258px; }
.study-tree { display: flex; flex-direction: column; flex: none; width: 229px; border-right: 1px solid #343a52; box-shadow: inset -1px 0 #f6f6f8, inset -2px 0 #888a93; padding-right: 3px; }
.filters { display: flex; flex: none; justify-content: flex-end; height: 26px; background: #d2d3d7; }
.fbtn { display: flex; align-items: center; justify-content: center; width: 23px; height: 22px; }
.fbtn.on { background: #b0c0d2; border: 1px solid #6cb0ea; }
.tree.motion { width: 224px; height: 214px; padding-top: 1px; }
.tree.motion li { margin-left: 20px; }
.tree.motion li.root { margin-left: 1px; }
.tree-scroll { height: 16px; width: 225px; background: #d2d3d7; }
.timeline { position: relative; display: flex; flex-direction: column; width: 1114px; }
.ruler { display: grid; flex: none; height: 26px; background: #d2d3d7; }
.ruler > * { grid-area: 1 / 1; }
.ruler-marks, .tracks { width: 1114px; }
.ruler-marks { height: 26px; }
.tracks { height: 214px; }
.labels { display: grid; grid-template-columns: repeat(11, 96.300px); padding: 1px 0 0 53px; color: #66676b; font-weight: bold; }
.labels u { display: inline-block; margin-left: -1px; text-decoration: none; font-size: 11px; transform: skewX(-8deg); }
.wide-scroll { height: 16px; padding-left: 7px; }
.wide-scroll .hthumb { width: 981px; height: 15px; margin-left: 6px; background: #d2d3d7; }
.wide-scroll svg:last-child { margin: 0 5px 0 auto; }
.playhead { position: absolute; left: 98px; top: 0; width: 2px; height: 240px; background: #87888b; }
.zoomers { position: absolute; right: 0; top: 218px; display: flex; align-items: center; gap: 7px; width: 69px; height: 22px; padding-left: 3px; background: #d2d3d7; }

.study-tabs { display: flex; flex: 1; height: 11px; overflow: hidden; }
.nav-btn { display: flex; align-items: center; justify-content: center; width: 15.500px; height: 16px; background: #b4b5b9; border: 1px solid #8b8c90; border-top: 2px solid #111; }
.nav-btn svg { width: 8px; height: 8px; }
.stab { width: 44px; height: 20px; background: #a9abaf; border: solid #111; border-width: 1px 1px 0; line-height: 12px; text-align: center; font-size: 13px; }
.stab.on { width: 83px; padding-right: 6px; background: #d2d3d7; border-width: 0 1px 0 0; font-size: 12.500px; line-height: 14px; }
.rest { flex: 1; border-top: 1px solid #111; }

.net-meter { position: absolute; left: 1104px; top: 636px; width: 122px; height: 30px; overflow: hidden; }
.net-meter svg { width: 122px; height: 30px; }
.pct { font: 13px "Noto Sans", sans-serif; fill: #15260a; }
.rate { font: 9.500px "Noto Sans", sans-serif; fill: #111; }
.pointer { position: absolute; left: 600px; top: 397px; width: 12px; height: 19px; }
```
